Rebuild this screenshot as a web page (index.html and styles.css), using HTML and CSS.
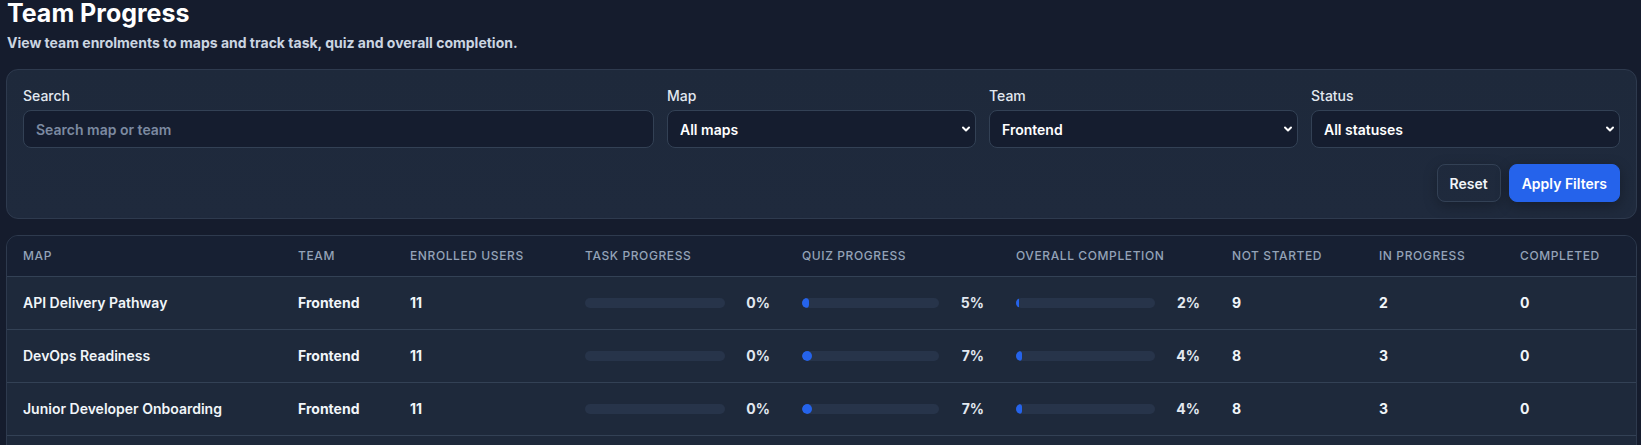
FILE: index.html
```html
<!DOCTYPE html>
<html lang="en">
<head>
    <meta charset="UTF-8">
    <meta name="viewport" content="width=device-width, initial-scale=1.0">
    <title>Team Progress</title>
    <link rel="stylesheet" href="styles.css">
</head>
<body>
    <div class="page">
        <h1 class="page-title">Team Progress</h1>
        <p class="page-sub">View team enrolments to maps and track task, quiz and overall completion.</p>

        <form class="filters">
            <div class="filter-grid">
                <div class="field field-wide">
                    <label for="search">Search</label>
                    <input type="text" id="search" placeholder="Search map or team">
                </div>
                <div class="field">
                    <label for="map">Map</label>
                    <div class="select-wrap">
                        <select id="map">
                            <option>All maps</option>
                        </select>
                        <svg class="chev" width="10" height="10" viewBox="0 0 10 10"><path d="M2 3.5 L5 6.5 L8 3.5" fill="none" stroke="#fff" stroke-width="2" stroke-linecap="round" stroke-linejoin="round"/></svg>
                    </div>
                </div>
                <div class="field">
                    <label for="team">Team</label>
                    <div class="select-wrap">
                        <select id="team">
                            <option>Frontend</option>
                        </select>
                        <svg class="chev" width="10" height="10" viewBox="0 0 10 10"><path d="M2 3.5 L5 6.5 L8 3.5" fill="none" stroke="#fff" stroke-width="2" stroke-linecap="round" stroke-linejoin="round"/></svg>
                    </div>
                </div>
                <div class="field">
                    <label for="status">Status</label>
                    <div class="select-wrap">
                        <select id="status">
                            <option>All statuses</option>
                        </select>
                        <svg class="chev" width="10" height="10" viewBox="0 0 10 10"><path d="M2 3.5 L5 6.5 L8 3.5" fill="none" stroke="#fff" stroke-width="2" stroke-linecap="round" stroke-linejoin="round"/></svg>
                    </div>
                </div>
            </div>
            <div class="actions">
                <button type="button" class="btn btn-ghost">Reset</button>
                <button type="button" class="btn btn-primary">Apply Filters</button>
            </div>
        </form>

        <div class="table-card">
            <table class="progress-table">
                <colgroup>
                    <col class="c-map"><col class="c-team"><col class="c-users"><col class="c-task"><col class="c-quiz"><col class="c-overall"><col class="c-ns"><col class="c-ip"><col class="c-done">
                </colgroup>
                <thead>
                    <tr>
                        <th>Map</th>
                        <th>Team</th>
                        <th>Enrolled Users</th>
                        <th>Task Progress</th>
                        <th>Quiz Progress</th>
                        <th>Overall Completion</th>
                        <th>Not Started</th>
                        <th>In Progress</th>
                        <th>Completed</th>
                    </tr>
                </thead>
                <tbody>
                    <tr>
                        <td class="name">API Delivery Pathway</td>
                        <td class="strong">Frontend</td>
                        <td class="strong">11</td>
                        <td><div class="bar"><div class="track"><div class="fill" style="width: 0%"></div></div><span class="pct">0%</span></div></td>
                        <td><div class="bar"><div class="track"><div class="fill" style="width: 5%"></div></div><span class="pct">5%</span></div></td>
                        <td><div class="bar"><div class="track"><div class="fill" style="width: 2%"></div></div><span class="pct">2%</span></div></td>
                        <td class="strong">9</td>
                        <td class="strong">2</td>
                        <td class="strong">0</td>
                    </tr>
                    <tr>
                        <td class="name">DevOps Readiness</td>
                        <td class="strong">Frontend</td>
                        <td class="strong">11</td>
                        <td><div class="bar"><div class="track"><div class="fill" style="width: 0%"></div></div><span class="pct">0%</span></div></td>
                        <td><div class="bar"><div class="track"><div class="fill" style="width: 7%"></div></div><span class="pct">7%</span></div></td>
                        <td><div class="bar"><div class="track"><div class="fill" style="width: 4%"></div></div><span class="pct">4%</span></div></td>
                        <td class="strong">8</td>
                        <td class="strong">3</td>
                        <td class="strong">0</td>
                    </tr>
                    <tr>
                        <td class="name">Junior Developer Onboarding</td>
                        <td class="strong">Frontend</td>
                        <td class="strong">11</td>
                        <td><div class="bar"><div class="track"><div class="fill" style="width: 0%"></div></div><span class="pct">0%</span></div></td>
                        <td><div class="bar"><div class="track"><div class="fill" style="width: 7%"></div></div><span class="pct">7%</span></div></td>
                        <td><div class="bar"><div class="track"><div class="fill" style="width: 4%"></div></div><span class="pct">4%</span></div></td>
                        <td class="strong">8</td>
                        <td class="strong">3</td>
                        <td class="strong">0</td>
                    </tr>
                    <tr>
                        <td class="name">Security Foundations</td>
                        <td class="strong">Frontend</td>
                        <td class="strong">11</td>
                        <td><div class="bar"><div class="track"><div class="fill" style="width: 0%"></div></div><span class="pct">0%</span></div></td>
                        <td><div class="bar"><div class="track"><div class="fill" style="width: 3%"></div></div><span class="pct">3%</span></div></td>
                        <td><div class="bar"><div class="track"><div class="fill" style="width: 1%"></div></div><span class="pct">1%</span></div></td>
                        <td class="strong">10</td>
                        <td class="strong">1</td>
                        <td class="strong">0</td>
                    </tr>
                </tbody>
            </table>
        </div>
    </div>
</body>
</html>
```

FILE: styles.css
```css
* {
    box-sizing: border-box;
}
body {
    margin: 0;
    background-color: #151c2d;
    color: #f1f5f9;
    font-family: Inter, "Noto Sans", sans-serif;
    font-size: 14px;
    line-height: 20px;
}
.page {
    padding: 0 4px 0 6px;
}
.page-title {
    margin: 0;
    padding-left: 1px;
    font-size: 25px;
    line-height: 26px;
    font-weight: 700;
    color: #ffffff;
}
.page-sub {
    margin: 7px 0 16px;
    padding-left: 1px;
    font-weight: 700;
    color: #cbd5e1;
}

/* filter card */
.filters {
    padding: 16px;
    background: linear-gradient(180deg, #1e293b, #1f2a3d);
    border: 1px solid #2e3a4e;
    border-radius: 12px;
}
.filter-grid {
    display: grid;
    grid-template-columns: repeat(5, 1fr);
    gap: 13px;
}
.field-wide {
    grid-column: span 2;
}
.field label {
    display: block;
    margin-bottom: 4px;
    font-weight: 500;
    color: #e2e8f0;
}
.field input, .field select {
    width: 100%;
    height: 38px;
    padding: 0 12px;
    background-color: #151d2f;
    border: 1px solid #334155;
    border-radius: 8px;
    color: #ffffff;
    font-family: inherit;
    font-size: 14px;
    font-weight: 600;
    outline: none;
}
.field input::placeholder {
    color: #7c8aa1;
}
.field select {
    appearance: none;
    -webkit-appearance: none;
    padding-right: 28px;
}
.select-wrap {
    position: relative;
}
.chev {
    position: absolute;
    right: 5px;
    top: 14px;
    pointer-events: none;
}
.actions {
    display: flex;
    justify-content: flex-end;
    gap: 8px;
    margin-top: 16px;
}
.btn {
    height: 38px;
    padding: 0 12px;
    border-radius: 8px;
    font-family: inherit;
    font-size: 14px;
    font-weight: 600;
    cursor: pointer;
}
.btn-ghost {
    background: transparent;
    border: 1px solid #334155;
    color: #f1f5f9;
    box-shadow: 0 4px 14px rgba(0, 0, 0, 0.25);
}
.btn-primary {
    background-color: #2563eb;
    border: 1px solid #2563eb;
    color: #ffffff;
    box-shadow: 0 4px 14px rgba(0, 0, 0, 0.3);
}

/* table */
.table-card {
    margin-top: 16px;
    background-color: #1e293b;
    border: 1px solid #2e3a4e;
    border-radius: 12px;
    overflow: hidden;
}
.progress-table {
    width: 100%;
    border-collapse: collapse;
    table-layout: fixed;
}
.c-map { width: 275px; }
.c-team { width: 112px; }
.c-users { width: 175px; }
.c-task { width: 217px; }
.c-quiz { width: 214px; }
.c-overall { width: 216px; }
.c-ns { width: 147px; }
.c-ip { width: 141px; }
.progress-table th {
    padding: 12px 16px;
    background-color: #172033;
    border-bottom: 1px solid #334155;
    text-align: left;
    font-size: 12px;
    line-height: 16px;
    font-weight: 500;
    letter-spacing: 0.05em;
    text-transform: uppercase;
    color: #94a3b8;
    white-space: nowrap;
}
.progress-table td {
    padding: 16px;
    border-bottom: 1px solid #334155;
    white-space: nowrap;
    color: #f1f5f9;
}
.progress-table td.name {
    font-weight: 600;
}
.progress-table td.strong {
    font-weight: 700;
}
.bar {
    display: flex;
    align-items: center;
    gap: 12px;
}
.track {
    flex: 1;
    height: 10px;
    background-color: #27344a;
    border-radius: 999px;
    overflow: hidden;
}
.fill {
    height: 100%;
    background-color: #2563eb;
    border-radius: 999px;
}
.pct {
    width: 33px;
    text-align: right;
    font-weight: 700;
    color: #e2e8f0;
}
```
